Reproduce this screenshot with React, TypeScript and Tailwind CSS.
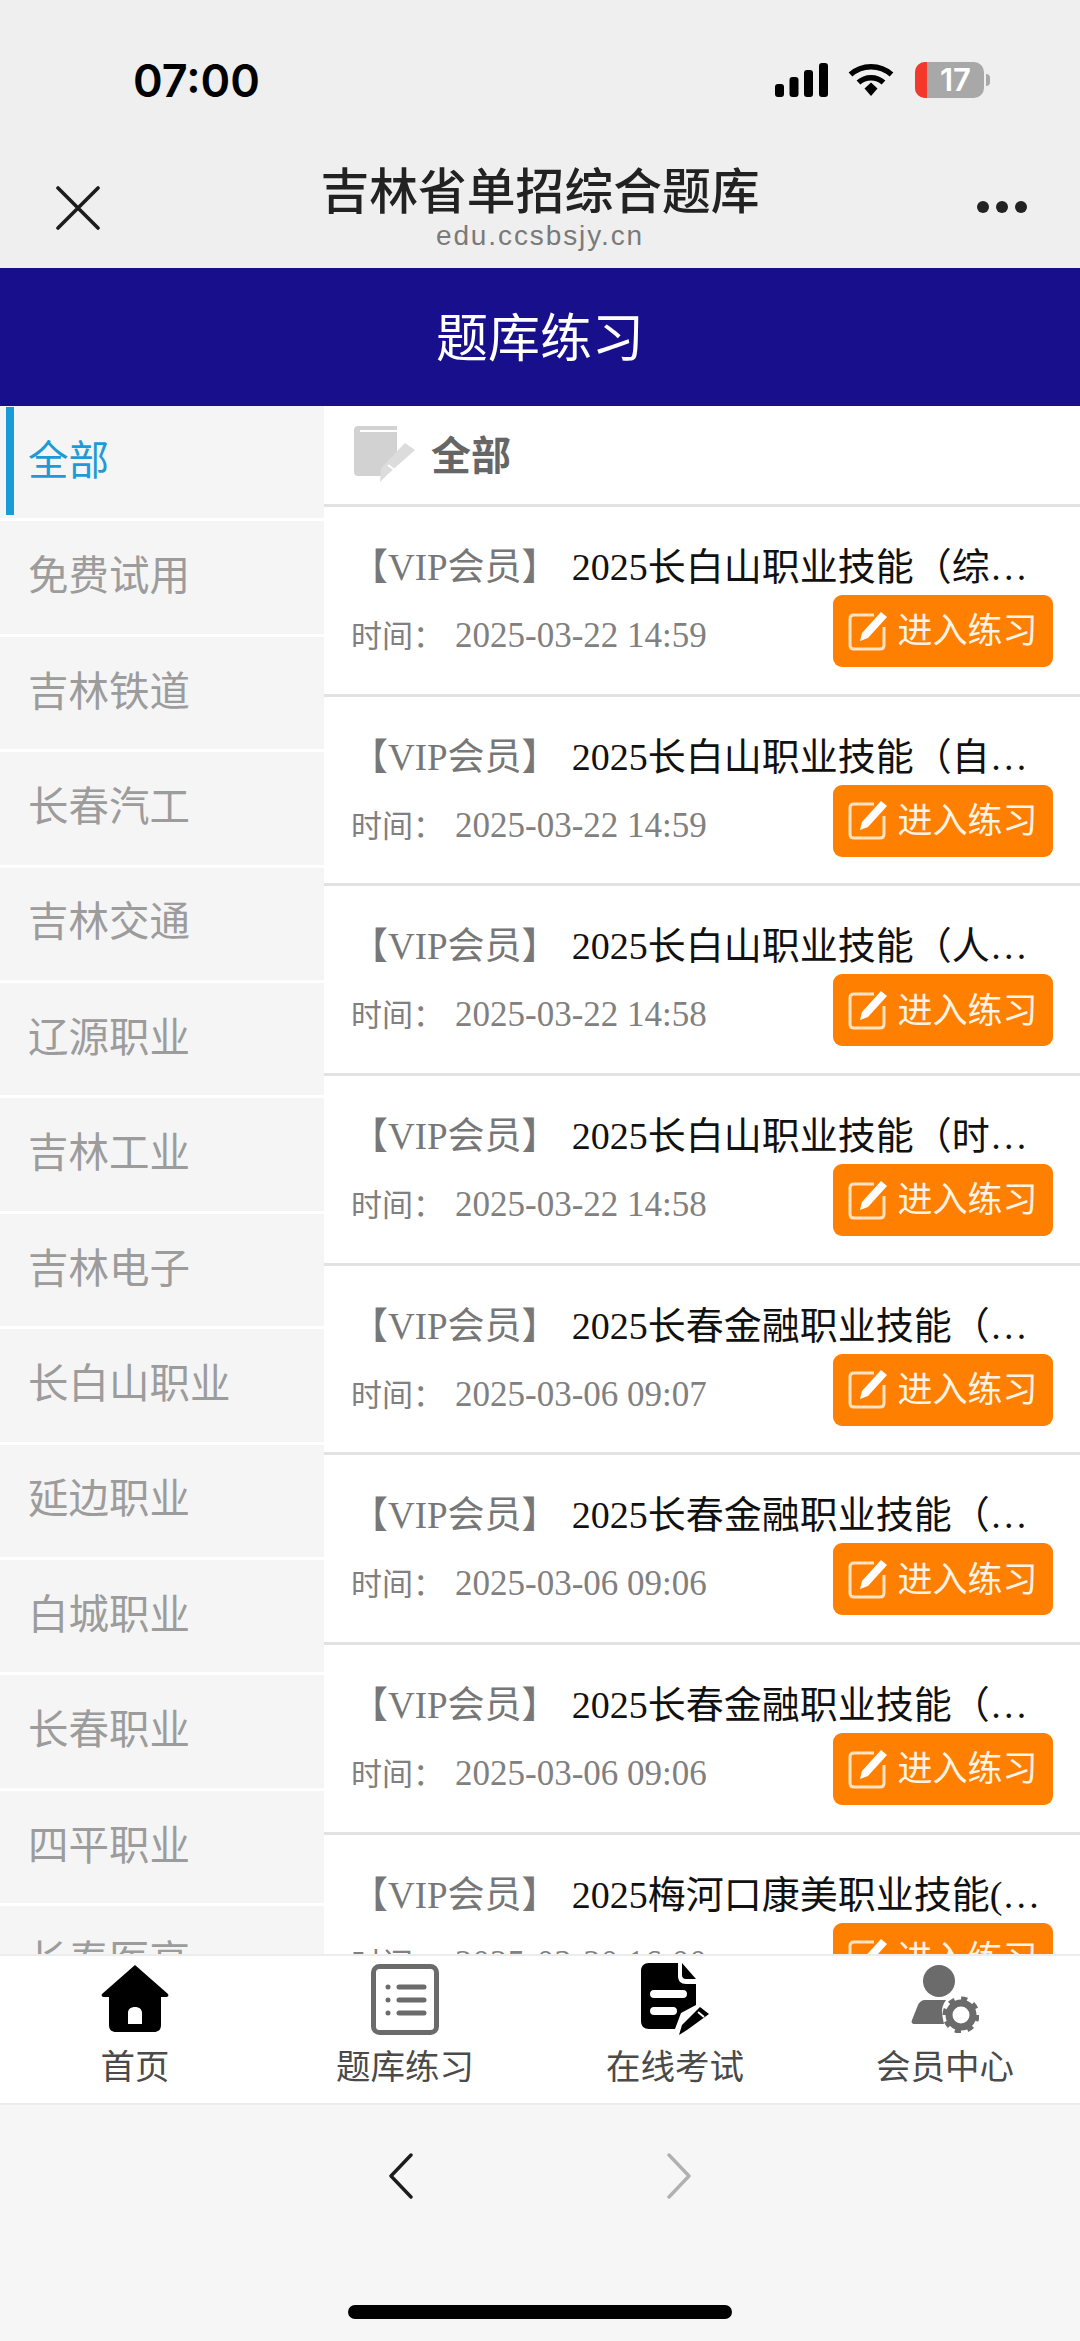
const CJK = "font-['Noto_Sans_CJK_SC','Noto_Sans',sans-serif]";

const categories = ["全部", "免费试用", "吉林铁道", "长春汽工", "吉林交通", "辽源职业", "吉林工业", "吉林电子", "长白山职业", "延边职业", "白城职业", "长春职业", "四平职业", "长春医高"];

const exams = [
  { title: "2025长白山职业技能（综合素质与职业技能题库）", time: "2025-03-22 14:59" },
  { title: "2025长白山职业技能（自动化专业技能题库）", time: "2025-03-22 14:59" },
  { title: "2025长白山职业技能（人力资源专业技能题库）", time: "2025-03-22 14:58" },
  { title: "2025长白山职业技能（时尚专业技能题库）", time: "2025-03-22 14:58" },
  { title: "2025长春金融职业技能（金融专业技能题库）", time: "2025-03-06 09:07" },
  { title: "2025长春金融职业技能（会计专业技能题库）", time: "2025-03-06 09:06" },
  { title: "2025长春金融职业技能（电商专业技能题库）", time: "2025-03-06 09:06" },
  { title: "2025梅河口康美职业技能(护理专业技能题库)", time: "2025-03-20 16:00" },
];

function SignalIcon() {
  return (
    <svg width="53" height="34" viewBox="0 0 53 34" fill="#000">
      <rect x="0" y="21" width="9" height="13" rx="3" />
      <rect x="14.5" y="14" width="9" height="20" rx="3" />
      <rect x="29" y="7" width="9" height="27" rx="3" />
      <rect x="44" y="0" width="9" height="34" rx="3" />
    </svg>
  );
}

function WifiIcon() {
  return (
    <svg width="46" height="34" viewBox="0 0 46 34" fill="none" stroke="#000" strokeWidth="5.5">
      <path d="M2.5 11.5C14 1 32 1 43.5 11.5" />
      <path d="M10.5 19.5C17.5 13 28.5 13 35.5 19.5" />
      <path d="M16.5 25.5L23 19.5L29.5 25.5L23 33Z" fill="#000" stroke="none" />
    </svg>
  );
}

function CloseIcon() {
  return (
    <svg width="44" height="44" viewBox="0 0 44 44" fill="none" stroke="#1c1c1c" strokeWidth="3.6" strokeLinecap="round">
      <path d="M2 2L42 42M42 2L2 42" />
    </svg>
  );
}

function NotebookIcon() {
  return (
    <svg width="62" height="56" viewBox="0 0 62 56">
      <path d="M4 0H43V4H6V6H43V35L27 50H4C1.500 50 0 48.500 0 46V4C0 1.500 1.500 0 4 0Z" fill="#d2d2d2" />
      <path d="M51 17L61 24L34 48L26 56L27 42Z" fill="#dcdcdc" />
      <path d="M34 39L42 45" stroke="#fff" strokeWidth="2" />
    </svg>
  );
}

function EditIcon() {
  return (
    <svg width="39" height="39" viewBox="0 0 39 39" fill="none">
      <path d="M26 3H6C3.500 3 2 4.500 2 7V33C2 35.500 3.500 37 6 37H32C34.500 37 36 35.500 36 33V15" stroke="#ffe3c4" strokeWidth="3" />
      <path d="M33 0L39 5L20 26L12 29L14 21Z" fill="#fff" />
    </svg>
  );
}

function HomeIcon() {
  return (
    <svg width="68" height="68" viewBox="0 0 68 68">
      <path fillRule="evenodd" d="M34 0L67 29C68 31 67 32 65 32H60V60C60 65 57 67 53 67H15C11 67 8 65 8 60V32H3C1 32 0 31 1 29ZM27 59H41V48C41 44 38 42 34 42C30 42 27 44 27 48Z" fill="#000" />
    </svg>
  );
}

function ListIcon() {
  return (
    <svg width="68" height="71" viewBox="0 0 68 71" fill="none" stroke="#6b6b6b">
      <rect x="2.500" y="2.500" width="63" height="66" rx="6" strokeWidth="5" />
      <path d="M28 23H53M28 36H53M28 49H53" strokeWidth="5" strokeLinecap="round" />
      <circle cx="17" cy="23" r="2.500" fill="#6b6b6b" stroke="none" />
      <circle cx="17" cy="36" r="2.500" fill="#6b6b6b" stroke="none" />
      <circle cx="17" cy="49" r="2.500" fill="#6b6b6b" stroke="none" />
    </svg>
  );
}

function DocIcon() {
  return (
    <svg width="69" height="72" viewBox="0 0 69 72">
      <path fillRule="evenodd" d="M8 0H37V13C37 18 40 21 45 21H55V42L40 50L34 66H8C3 66 0 63 0 58V8C0 3 3 0 8 0ZM13 27C10 27 9 29 9 31C9 33 10 35 13 35H42C45 35 46 33 46 31C46 29 45 27 42 27ZM13 44C10 44 9 46 9 48C9 50 10 52 13 52H32C35 52 36 50 36 48C36 46 35 44 32 44Z" fill="#000" />
      <path d="M41 0L55 16H45C42.500 16 41 14.500 41 12Z" fill="#000" />
      <path d="M59 44L68 51L46 67L38 72L41 62Z" fill="#000" />
      <path d="M57 49L63 54" stroke="#fff" strokeWidth="2" />
    </svg>
  );
}

function UserGearIcon() {
  return (
    <svg width="68" height="68" viewBox="0 0 68 68" fill="#6b6b6b">
      <ellipse cx="28" cy="16" rx="16" ry="16" />
      <path d="M14 35H35C32 39 31 43 31 46C31 50 32 54 33 59H4C1 59 0 58 1 55L7 40C8 37 11 35 14 35Z" />
      <circle cx="50" cy="50" r="12" fill="none" stroke="#6b6b6b" strokeWidth="7" />
      <circle cx="50" cy="50" r="16" fill="none" stroke="#6b6b6b" strokeWidth="5" strokeDasharray="6 6.500" />
    </svg>
  );
}

const tabs = [
  { label: "首页", icon: <HomeIcon /> },
  { label: "题库练习", icon: <ListIcon /> },
  { label: "在线考试", icon: <DocIcon /> },
  { label: "会员中心", icon: <UserGearIcon /> },
];

function StatusBar() {
  return (
    <div className="flex h-[124px] items-start justify-between pl-[133px] pr-[90px] pt-[52px]">
      <span className="font-['Inter',sans-serif] text-[45px] font-semibold leading-[58px] text-black">07:00</span>
      <div className="flex items-center pt-[10px]">
        <SignalIcon />
        <div className="ml-[20px]"><WifiIcon /></div>
        <div className="ml-[21px] flex h-[36px] w-[69px] overflow-hidden rounded-[10px] bg-[#a8a8a8]">
          <div className="w-[12px] bg-[#f5382c]" />
          <div className="flex flex-1 items-center justify-center font-['Inter',sans-serif] text-[31px] font-semibold text-white">17</div>
        </div>
        <div className="ml-[2px] h-[12px] w-[4px] rounded-r-full bg-[#a8a8a8]" />
      </div>
    </div>
  );
}

function TopBar() {
  return (
    <div className="grid h-[144px] grid-cols-[1fr_auto_1fr] bg-[#efefef] pl-[53px] pr-[53px]">
      <div className="pl-[3px] pt-[62px]"><CloseIcon /></div>
      <div className="flex flex-col items-center pt-[34px]">
        <span className="text-[48.800px] font-medium leading-[60px] text-[#222]">吉林省单招综合题库</span>
        <span className="mt-[3px] font-['Liberation_Sans',sans-serif] text-[28px] leading-[30px] tracking-[1.9px] text-[#7a7a7a]">edu.ccsbsjy.cn</span>
      </div>
      <div className="flex items-start justify-end gap-[7px] pt-[77px]">
        <span className="h-[12px] w-[12px] rounded-full bg-[#222]" />
        <span className="h-[12px] w-[12px] rounded-full bg-[#222]" />
        <span className="h-[12px] w-[12px] rounded-full bg-[#222]" />
      </div>
    </div>
  );
}

function Sidebar() {
  return (
    <div className="w-[324px] shrink-0 overflow-hidden">
      {categories.map((name, i) => (
        <div key={name} className="flex h-[115.400px] items-center border-b-[3px] border-white bg-[#f5f5f5] pb-[3px] pl-[6px]">
          <div className={`h-[108px] w-[8px] ${i === 0 ? "bg-[#1a9bd7]" : "bg-transparent"}`} />
          <span className={`mb-[5px] pl-[14px] text-[40.500px] ${i === 0 ? "text-[#1e9bd7]" : "text-[#9c9c9c]"}`}>{name}</span>
        </div>
      ))}
    </div>
  );
}

function ExamRow({ title, time }: { title: string; time: string }) {
  return (
    <div className="h-[189.700px] shrink-0 border-b-[3px] border-[#e2e2e2] px-[27px] pt-[38px]">
      <div className="h-[44px] w-[700px] truncate font-['Liberation_Serif','Noto_Sans_CJK_SC',serif] text-[38px] leading-[44px] text-[#111]">
        <span className="mr-[13px] text-[37px] text-[#777]">【VIP会员】</span>
        {title}
      </div>
      <div className="mt-[6px] flex items-start justify-between">
        <span className="pt-[18px] font-['Liberation_Serif','Noto_Sans_CJK_SC',serif] text-[31px] leading-[46px] text-[#808080]">
          时间：<span className="ml-[11px] text-[35px]">{time}</span>
        </span>
        <div className="flex h-[72px] w-[220px] items-center justify-center gap-[10px] rounded-[9px] bg-[#ff8000] text-[35px] text-[#fff3e6]">
          <EditIcon />
          <span className="mb-[5px]">进入练习</span>
        </div>
      </div>
    </div>
  );
}

function ExamList() {
  return (
    <div className="flex min-w-0 flex-1 flex-col overflow-hidden bg-white">
      <div className="flex h-[101px] shrink-0 items-center gap-[15px] border-b-[3px] border-[#e2e2e2] pb-[2px] pl-[30px]">
        <NotebookIcon />
        <span className="mb-[3px] text-[40px] font-bold text-[#666]">全部</span>
      </div>
      {exams.map((exam) => (
        <ExamRow key={exam.title} title={exam.title} time={exam.time} />
      ))}
    </div>
  );
}

function TabBar() {
  return (
    <div className="grid h-[151px] shrink-0 grid-cols-4 border-y-[2px] border-[#ececec] bg-white">
      {tabs.map((tab) => (
        <div key={tab.label} className="flex flex-col items-center pt-[7px]">
          <div className="flex h-[72px] items-center">{tab.icon}</div>
          <span className="mt-[7px] text-[34.500px] leading-[44px] text-[#4a4a4a]">{tab.label}</span>
        </div>
      ))}
    </div>
  );
}

function BrowserBar() {
  return (
    <div className="flex h-[236px] shrink-0 flex-col items-center bg-[#f6f6f6]">
      <div className="flex gap-[254px] pt-[48px]">
        <svg width="24" height="46" viewBox="0 0 24 46" fill="none" stroke="#1c1c1c" strokeWidth="3.400" strokeLinecap="round" strokeLinejoin="round">
          <path d="M22 2L2 23L22 44" />
        </svg>
        <svg width="24" height="46" viewBox="0 0 24 46" fill="none" stroke="#b0b0b0" strokeWidth="3.400" strokeLinecap="round" strokeLinejoin="round">
          <path d="M2 2L22 23L2 44" />
        </svg>
      </div>
      <div className="mt-[106px] h-[14px] w-[384px] rounded-full bg-black" />
    </div>
  );
}

export default function App() {
  return (
    <div className={`flex h-[2341px] w-[1080px] flex-col overflow-hidden bg-white ${CJK}`}>
      <div className="shrink-0 bg-[#efefef]">
        <StatusBar />
        <TopBar />
      </div>
      <div className="flex h-[138px] shrink-0 items-center justify-center bg-[#170f8c] pb-[4px] text-[52px] text-white">题库练习</div>
      <div className="flex min-h-0 flex-1">
        <Sidebar />
        <ExamList />
      </div>
      <TabBar />
      <BrowserBar />
    </div>
  );
}
